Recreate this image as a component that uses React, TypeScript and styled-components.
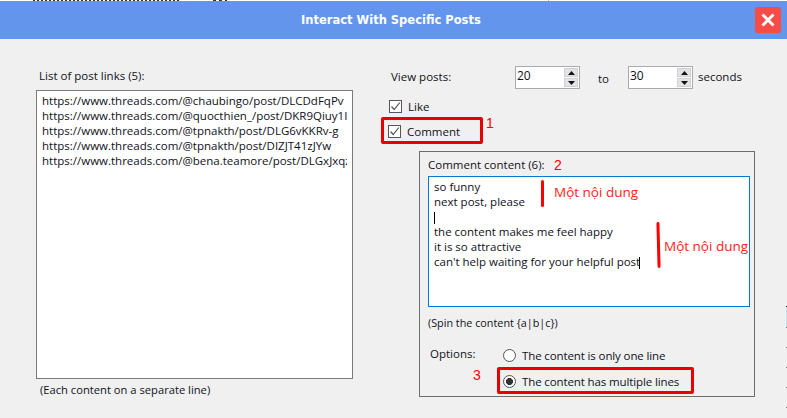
import React from 'react'
import styled, { createGlobalStyle } from 'styled-components'

const links = [
  'https://www.threads.com/@chaubingo/post/DLCDdFqPv',
  'https://www.threads.com/@quocthien_/post/DKR9Qiuy1I',
  'https://www.threads.com/@tpnakth/post/DLG6vKKRv-g',
  'https://www.threads.com/@tpnakth/post/DIZJT41zJYw',
  'https://www.threads.com/@bena.teamore/post/DLGxJxqz',
]

const comments = [
  'so funny',
  'next post, please',
  '\u00a0',
  'the content makes me feel happy',
  'it is so attractive',
  "can't help waiting for your helpful post",
]

const Check = () => (
  <CheckBox>
    <svg width="11" height="11" viewBox="0 0 11 11">
      <path d="M1.5 5.5 L4.2 8.5 L9.8 1.5" fill="none" stroke="#555" strokeWidth="1.2" />
    </svg>
  </CheckBox>
)

const Spinner = ({ value }: { value: number }) => (
  <SpinBox>
    <SpinValue>{value}</SpinValue>
    <SpinButtons>
      <SpinButton>
        <svg width="7" height="4" viewBox="0 0 7 4"><path d="M3.5 0 L7 4 L0 4 Z" fill="#111" /></svg>
      </SpinButton>
      <SpinButton>
        <svg width="7" height="4" viewBox="0 0 7 4"><path d="M0 0 L7 0 L3.5 4 Z" fill="#111" /></svg>
      </SpinButton>
    </SpinButtons>
  </SpinBox>
)

export default function App() {
  return (
    <>
      <GlobalStyle />
      <Page>
        <TopStrip />
        <TitleBar>
          <Title>Interact With Specific Posts</Title>
          <CloseButton>
            <svg width="16" height="16" viewBox="0 0 16 16">
              <path d="M2.5 2.5 L13.5 13.5 M13.5 2.5 L2.5 13.5" stroke="#fff" strokeWidth="3" />
            </svg>
          </CloseButton>
        </TitleBar>
        <Body>
          <LeftColumn>
            <LeftLabel>List of post links (5):</LeftLabel>
            <LinkList>
              {links.map((link) => (
                <LinkLine key={link}>{link}</LinkLine>
              ))}
            </LinkList>
            <LeftCaption>(Each content on a separate line)</LeftCaption>
          </LeftColumn>
          <RightColumn>
            <ViewRow>
              <ViewLabel>View posts:</ViewLabel>
              <Spinner value={20} />
              <ToLabel>to</ToLabel>
              <Spinner value={30} />
              <SecondsLabel>seconds</SecondsLabel>
            </ViewRow>
            <LikeRow>
              <Check />
              <span>Like</span>
            </LikeRow>
            <CommentRow>
              <Check />
              <span>Comment</span>
              <Mark $top={-4} $left={102}>1</Mark>
            </CommentRow>
            <CommentPanel>
              <PanelLabel>
                Comment content (6):
                <Mark $top={1} $left={126}>2</Mark>
              </PanelLabel>
              <CommentEditor>
                {comments.map((line) => (
                  <CommentLine key={line}>{line}</CommentLine>
                ))}
                <Caret $top={35} $left={5} />
                <Caret $top={80} $left={210} />
                <Bracket $top={3} $left={112} $height={27} />
                <Note $top={8} $left={125}>Một nội dung</Note>
                <Bracket $top={45} $left={228} $height={46} $tilt={-1.5} />
                <Note $top={62} $left={235}>Một nội dung</Note>
              </CommentEditor>
              <SpinHint>(Spin the content {'{a|b|c}'})</SpinHint>
              <OptionsRow>
                <OptionsLabel>Options:</OptionsLabel>
                <OptionList>
                  <OptionPlain>
                    <Radio />
                    <OptionText>The content is only one line</OptionText>
                  </OptionPlain>
                  <OptionMarked>
                    <Radio $checked />
                    <OptionText>The content has multiple lines</OptionText>
                    <Mark $top={-2} $left={-27}>3</Mark>
                  </OptionMarked>
                </OptionList>
              </OptionsRow>
            </CommentPanel>
          </RightColumn>
        </Body>
        <EdgeSliver />
      </Page>
    </>
  )
}

const GlobalStyle = createGlobalStyle`
  html, body {
    margin: 0;
    padding: 0;
    background: #f0f0f0;
  }
  body {
    font-family: "Open Sans", "Noto Sans", sans-serif;
    font-size: 11.5px;
    line-height: 15px;
    color: #101020;
  }
`

const Page = styled.div`
  position: relative;
  width: 787px;
  height: 418px;
  overflow: hidden;
  background: #f0f0f0;
`

// the window behind the dialog shows through on the first pixel row
const TopStrip = styled.div`
  height: 1px;
  background:
    repeating-linear-gradient(90deg, #333 0 2px, #fff 2px 4px) 33px 0 / 146px 1px no-repeat,
    repeating-linear-gradient(90deg, #333 0 3px, #fff 3px 6px) 213px 0 / 14px 1px no-repeat,
    linear-gradient(#bbb, #bbb) 548px 0 / 1px 1px no-repeat,
    #fff;
`

const TitleBar = styled.div`
  height: 38px;
  background: #6495ed;
  display: flex;
  align-items: center;
  padding: 0 6px 0 301px;
  justify-content: space-between;
`

const Title = styled.div`
  font-family: "DejaVu Sans", sans-serif;
  font-weight: 700;
  font-size: 11.5px;
  color: #fff;
`

const CloseButton = styled.div`
  width: 26px;
  height: 26px;
  background: #f64c45;
  border-radius: 3px;
  display: flex;
  align-items: center;
  justify-content: center;
`

const Body = styled.div`
  display: flex;
  padding: 27px 0 0 36px;
`

const LeftColumn = styled.div`
  width: 317px;
  margin-right: 38px;
  padding-top: 2px;
`

const LeftLabel = styled.div`
  padding-left: 3px;
  margin-bottom: 7px;
`

const LinkList = styled.div`
  box-sizing: border-box;
  width: 317px;
  height: 289px;
  padding: 2px 5px;
  background: #fff;
  border: 1px solid #7a7a7a;
`

const LinkLine = styled.div`
  white-space: nowrap;
  overflow: hidden;
`

const LeftCaption = styled.div`
  padding-left: 4px;
  margin-top: 3px;
  font-size: 11.2px;
`

const RightColumn = styled.div`
  display: flex;
  flex-direction: column;
  width: 365px;
`

const ViewRow = styled.div`
  display: flex;
  align-items: center;
  height: 23px;
`

const ViewLabel = styled.span`
  width: 124px;
  margin-top: -2px;
`

const SpinBox = styled.div`
  box-sizing: border-box;
  width: 65px;
  height: 23px;
  background: #fff;
  border: 1px solid #ababab;
  display: flex;
  justify-content: space-between;
  padding: 1px;
`

const SpinValue = styled.span`
  font-size: 12px;
`

const SpinButtons = styled.div`
  display: flex;
  flex-direction: column;
  gap: 1px;
  width: 14px;
`

const SpinButton = styled.div`
  flex: 1;
  background: #e4e2e6;
  border: 1px solid #d0d0d0;
  display: flex;
  align-items: center;
  justify-content: center;
`

const ToLabel = styled.span`
  width: 48px;
  text-align: center;
  margin-top: 2px;
  padding-right: 1px;
  box-sizing: border-box;
`

const SecondsLabel = styled.span`
  margin-left: 5px;
  margin-top: -2px;
`

const LikeRow = styled.label`
  display: flex;
  align-items: center;
  gap: 6px;
  height: 15px;
  margin: 10px 0 0 -2px;
`

const CheckBox = styled.span`
  box-sizing: border-box;
  width: 13px;
  height: 13px;
  background: #fff;
  border: 1px solid #555;
  display: flex;
  align-items: center;
  justify-content: center;
`

const CommentRow = styled.label`
  position: relative;
  box-sizing: border-box;
  width: 102px;
  height: 27px;
  margin: 3px 0 0 -10px;
  padding: 2px 0 0 4px;
  display: flex;
  align-items: center;
  gap: 6px;
  border: 3px solid #e80000;
  border-radius: 2px;
`

const Mark = styled.span<{ $top: number; $left: number }>`
  position: absolute;
  top: ${(p) => p.$top}px;
  left: ${(p) => p.$left}px;
  color: #f00;
  font-family: "Liberation Sans", sans-serif;
  font-size: 14px;
  font-weight: 400;
`

const CommentPanel = styled.div`
  box-sizing: border-box;
  width: 336px;
  height: 246px;
  margin: 7px 0 0 28px;
  padding: 5px 4px 0 8px;
  border: 1px solid #6d6d6d;
`

const PanelLabel = styled.div`
  position: relative;
  height: 19px;
`

const CommentEditor = styled.div`
  position: relative;
  box-sizing: border-box;
  height: 131px;
  padding: 2px 5px;
  background: #fff;
  border: 1px solid #0078d7;
`

const CommentLine = styled.div`
  white-space: nowrap;
`

const Caret = styled.span<{ $top: number; $left: number }>`
  position: absolute;
  top: ${(p) => p.$top}px;
  left: ${(p) => p.$left}px;
  width: 1px;
  height: 12px;
  background: #000;
`

const Bracket = styled.span<{ $top: number; $left: number; $height: number; $tilt?: number }>`
  position: absolute;
  top: ${(p) => p.$top}px;
  left: ${(p) => p.$left}px;
  width: 3px;
  height: ${(p) => p.$height}px;
  background: #f00;
  border-radius: 2px;
  transform: rotate(${(p) => p.$tilt ?? 0}deg);
`

const Note = styled.span<{ $top: number; $left: number }>`
  position: absolute;
  top: ${(p) => p.$top}px;
  left: ${(p) => p.$left}px;
  color: #f22;
  font-family: "Open Sans", sans-serif;
  font-size: 13.5px;
  white-space: nowrap;
`

const SpinHint = styled.div`
  margin-top: 8px;
  font-size: 10.8px;
`

const OptionsRow = styled.div`
  display: flex;
  margin-top: 18px;
`

const OptionsLabel = styled.span`
  width: 69px;
  padding-left: 2px;
  box-sizing: border-box;
  margin-top: -2px;
`

const OptionList = styled.div`
  display: flex;
  flex-direction: column;
`

const OptionPlain = styled.label`
  display: flex;
  align-items: center;
  gap: 6px;
  height: 15px;
  margin-bottom: 4px;
  padding-left: 6px;
`

const OptionMarked = styled.label`
  position: relative;
  box-sizing: border-box;
  width: 197px;
  height: 27px;
  display: flex;
  align-items: center;
  gap: 6px;
  padding: 2px 0 0 3px;
  border: 3px solid #e80000;
  border-radius: 2px;
`

const OptionText = styled.span`
  letter-spacing: -0.12px;
`

const Radio = styled.span<{ $checked?: boolean }>`
  box-sizing: border-box;
  width: 13px;
  height: 13px;
  flex: none;
  border-radius: 50%;
  background: ${(p) => (p.$checked ? 'radial-gradient(circle, #333 0 3.2px, #fff 3.8px)' : '#fff')};
  border: 1px solid #555;
`

// sliver of the window behind, visible on the last pixel column
const EdgeSliver = styled.div`
  position: absolute;
  top: 306px;
  right: 0;
  width: 1px;
  height: 102px;
  background:
    linear-gradient(#222, #222) 0 0 / 1px 1px no-repeat,
    linear-gradient(#c6e4f6, #c6e4f6) 0 1px / 1px 20px no-repeat,
    repeating-linear-gradient(#777 0 1px, transparent 1px 20px) 0 21px / 1px 81px no-repeat;
`
